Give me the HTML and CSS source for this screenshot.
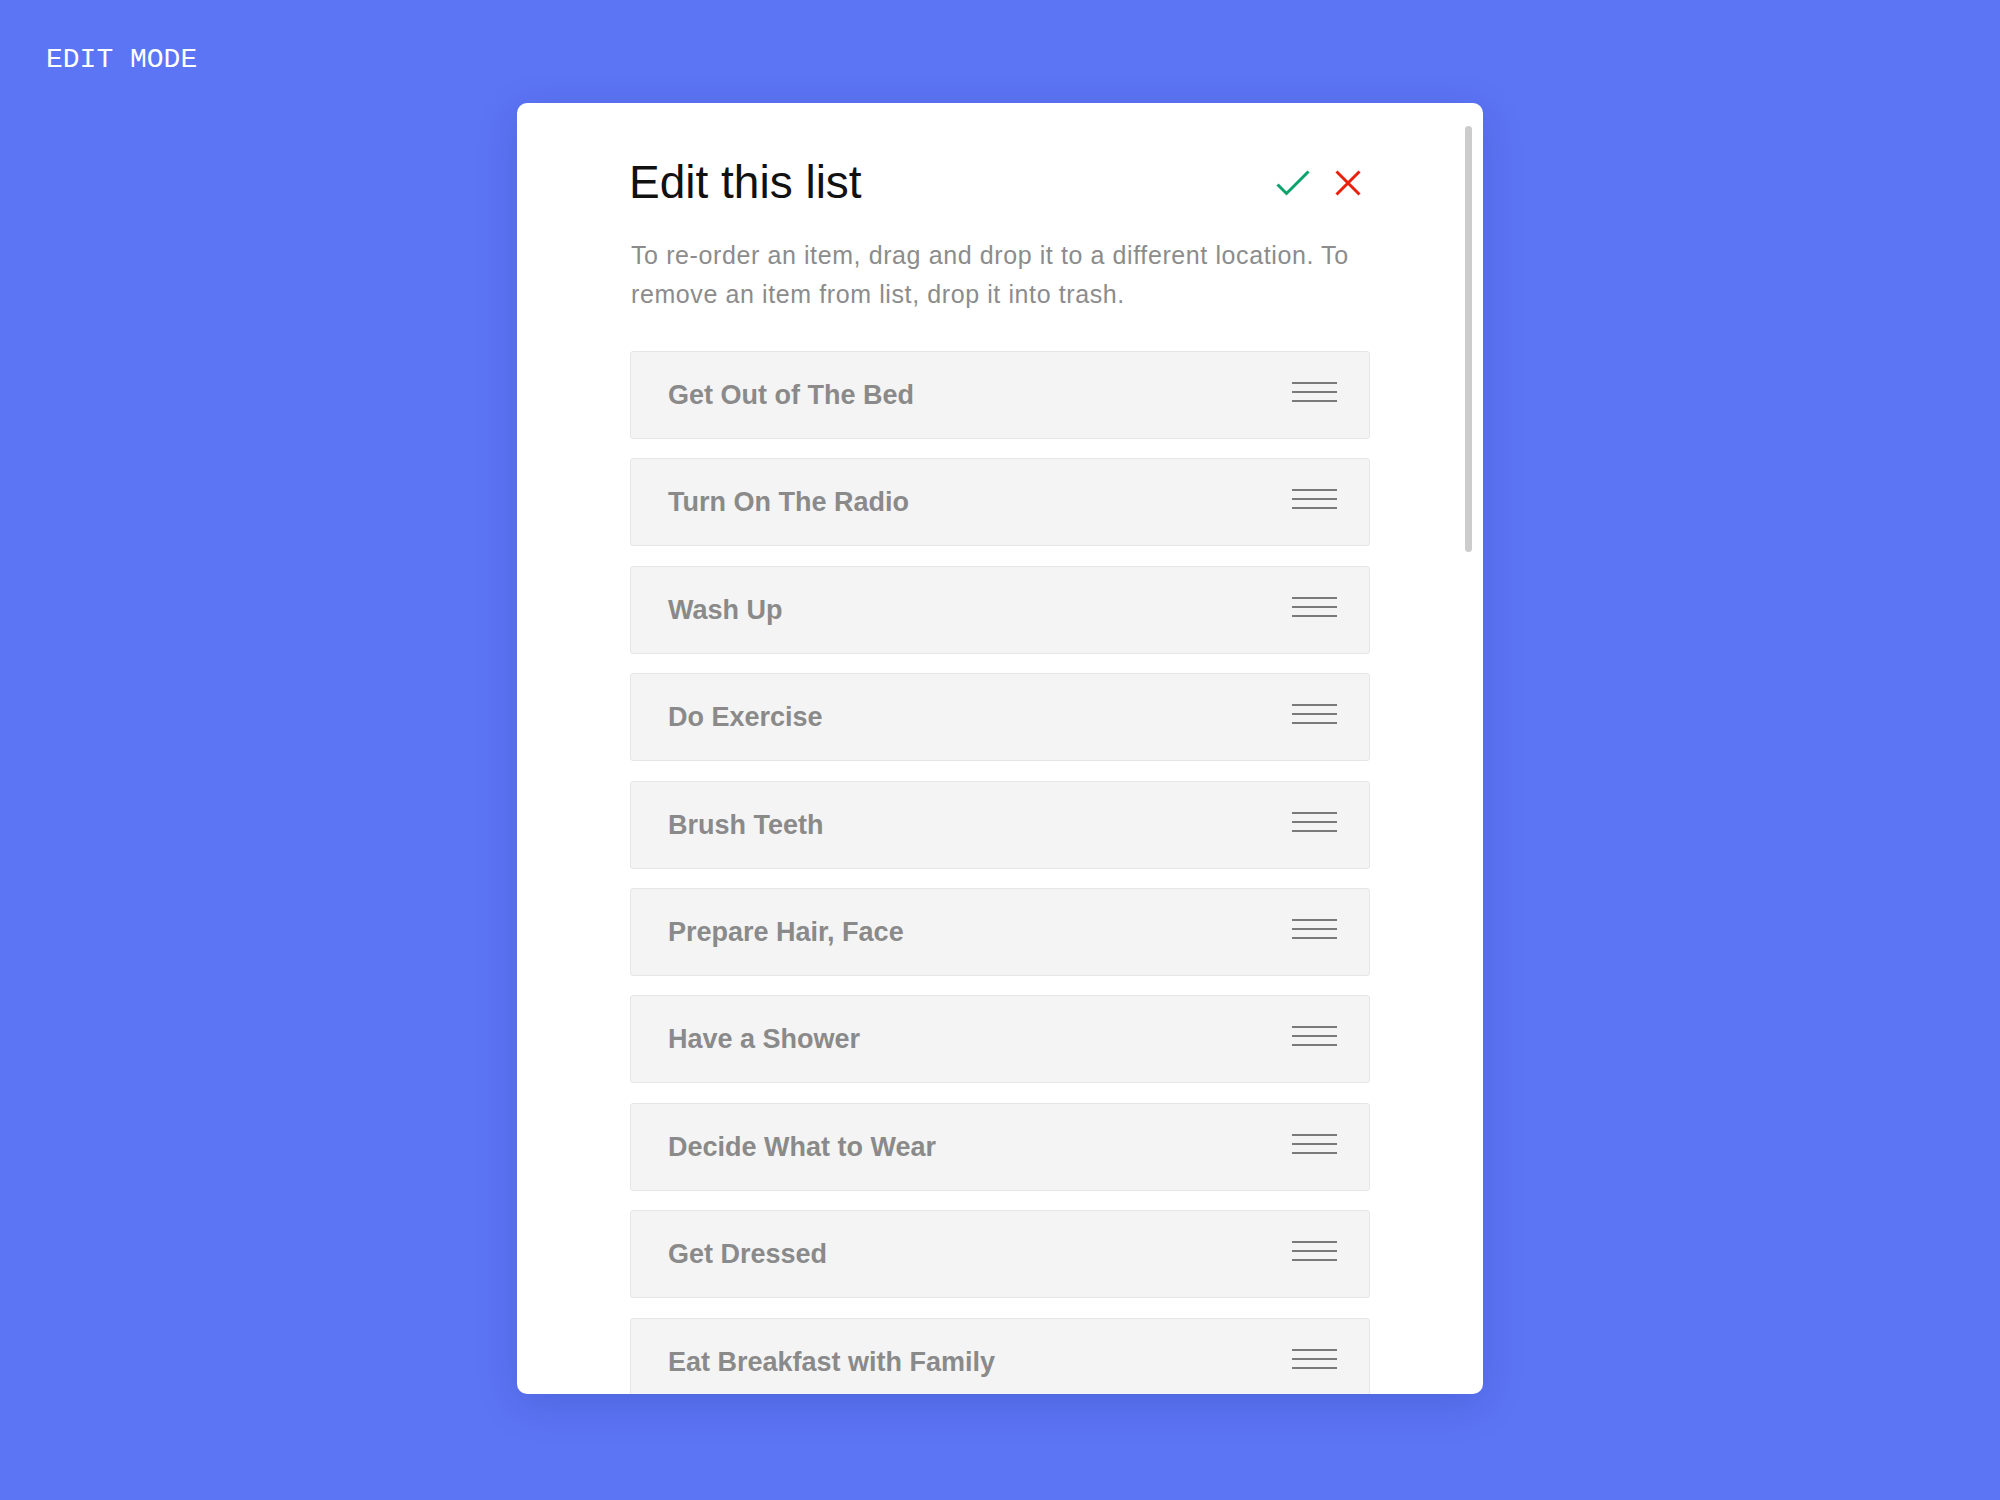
FILE: index.html
```html
<!DOCTYPE html>
<html lang="en">
<head>
<meta charset="utf-8">
<title>Edit mode</title>
<link rel="stylesheet" href="styles.css">
</head>
<body>
<div class="mode-label">EDIT MODE</div>
<main class="card">
  <div class="scrollbar"></div>
  <header class="card-head">
    <h1 class="title">Edit this list</h1>
    <div class="actions">
      <button class="icon-btn" aria-label="Save">
        <svg width="34" height="26" viewBox="0 0 34 26"><path d="M1.5 14.5 L10.5 23.5 L32.5 1.5" fill="none" stroke="#0aa36c" stroke-width="3"/></svg>
      </button>
      <button class="icon-btn" aria-label="Cancel">
        <svg width="26" height="26" viewBox="0 0 26 26"><path d="M1.5 1.5 L24.5 24.5 M24.5 1.5 L1.5 24.5" fill="none" stroke="#e8200c" stroke-width="3"/></svg>
      </button>
    </div>
  </header>
  <p class="hint">To re-order an item, drag and drop it to a different location. To remove an item from list, drop it into trash.</p>
  <ul class="items">
    <li class="item"><span class="item-text">Get Out of The Bed</span><span class="handle"><i></i><i></i><i></i></span></li>
    <li class="item"><span class="item-text">Turn On The Radio</span><span class="handle"><i></i><i></i><i></i></span></li>
    <li class="item"><span class="item-text">Wash Up</span><span class="handle"><i></i><i></i><i></i></span></li>
    <li class="item"><span class="item-text">Do Exercise</span><span class="handle"><i></i><i></i><i></i></span></li>
    <li class="item"><span class="item-text">Brush Teeth</span><span class="handle"><i></i><i></i><i></i></span></li>
    <li class="item"><span class="item-text">Prepare Hair, Face</span><span class="handle"><i></i><i></i><i></i></span></li>
    <li class="item"><span class="item-text">Have a Shower</span><span class="handle"><i></i><i></i><i></i></span></li>
    <li class="item"><span class="item-text">Decide What to Wear</span><span class="handle"><i></i><i></i><i></i></span></li>
    <li class="item"><span class="item-text">Get Dressed</span><span class="handle"><i></i><i></i><i></i></span></li>
    <li class="item"><span class="item-text">Eat Breakfast with Family</span><span class="handle"><i></i><i></i><i></i></span></li>
  </ul>
</main>
</body>
</html>
```
FILE: styles.css
```css
* { box-sizing: border-box; }
html, body { margin: 0; padding: 0; }
body {
  background: #5c75f4;
  width: 2000px;
  height: 1500px;
  overflow: hidden;
  font-family: "Liberation Sans", Arial, sans-serif;
}
.mode-label {
  font-family: "Liberation Mono", "Courier New", monospace;
  font-size: 28px;
  line-height: 30px;
  color: #ffffff;
  margin: 45px 0 0 46px;
}
.card {
  position: relative;
  width: 966px;
  height: 1291px;
  margin: 28px auto 0;
  background: #ffffff;
  border-radius: 10px;
  box-shadow: 0 10px 40px rgba(20, 30, 120, 0.18);
  overflow: hidden;
  padding: 52px 113px 0 113px;
}
.scrollbar {
  position: absolute;
  top: 23px;
  right: 11px;
  width: 7px;
  height: 426px;
  border-radius: 4px;
  background: #cccccc;
}
.card-head {
  display: flex;
  align-items: center;
  justify-content: space-between;
  height: 55px;
}
.title {
  margin: 0 0 0 -1px;
  font-size: 46px;
  line-height: 55px;
  font-weight: 400;
  color: #111111;
}
.actions {
  display: flex;
  align-items: center;
  gap: 25px;
  margin-right: 9px;
}
.icon-btn {
  border: 0;
  background: none;
  padding: 0;
  display: block;
  line-height: 0;
}
.hint {
  margin: 26px 0 0 1px;
  font-size: 25px;
  letter-spacing: 0.6px;
  line-height: 39px;
  color: #8c8c8c;
}
.items {
  list-style: none;
  margin: 37px 0 0;
  padding: 0;
  display: flex;
  flex-direction: column;
  gap: 19.4px;
}
.item {
  height: 88px;
  flex: none;
  display: flex;
  align-items: center;
  justify-content: space-between;
  background: #f4f4f4;
  border: 1px solid #e6e6e6;
  border-radius: 3px;
  padding: 0 32px 0 37px;
}
.item-text {
  font-size: 27px;
  line-height: 30px;
  font-weight: 700;
  color: #8a8a8a;
}
.handle {
  display: flex;
  flex-direction: column;
  gap: 7px;
  width: 45px;
  margin-bottom: 6px;
}
.handle i {
  display: block;
  height: 2px;
  background: #7a7a7a;
}
```
